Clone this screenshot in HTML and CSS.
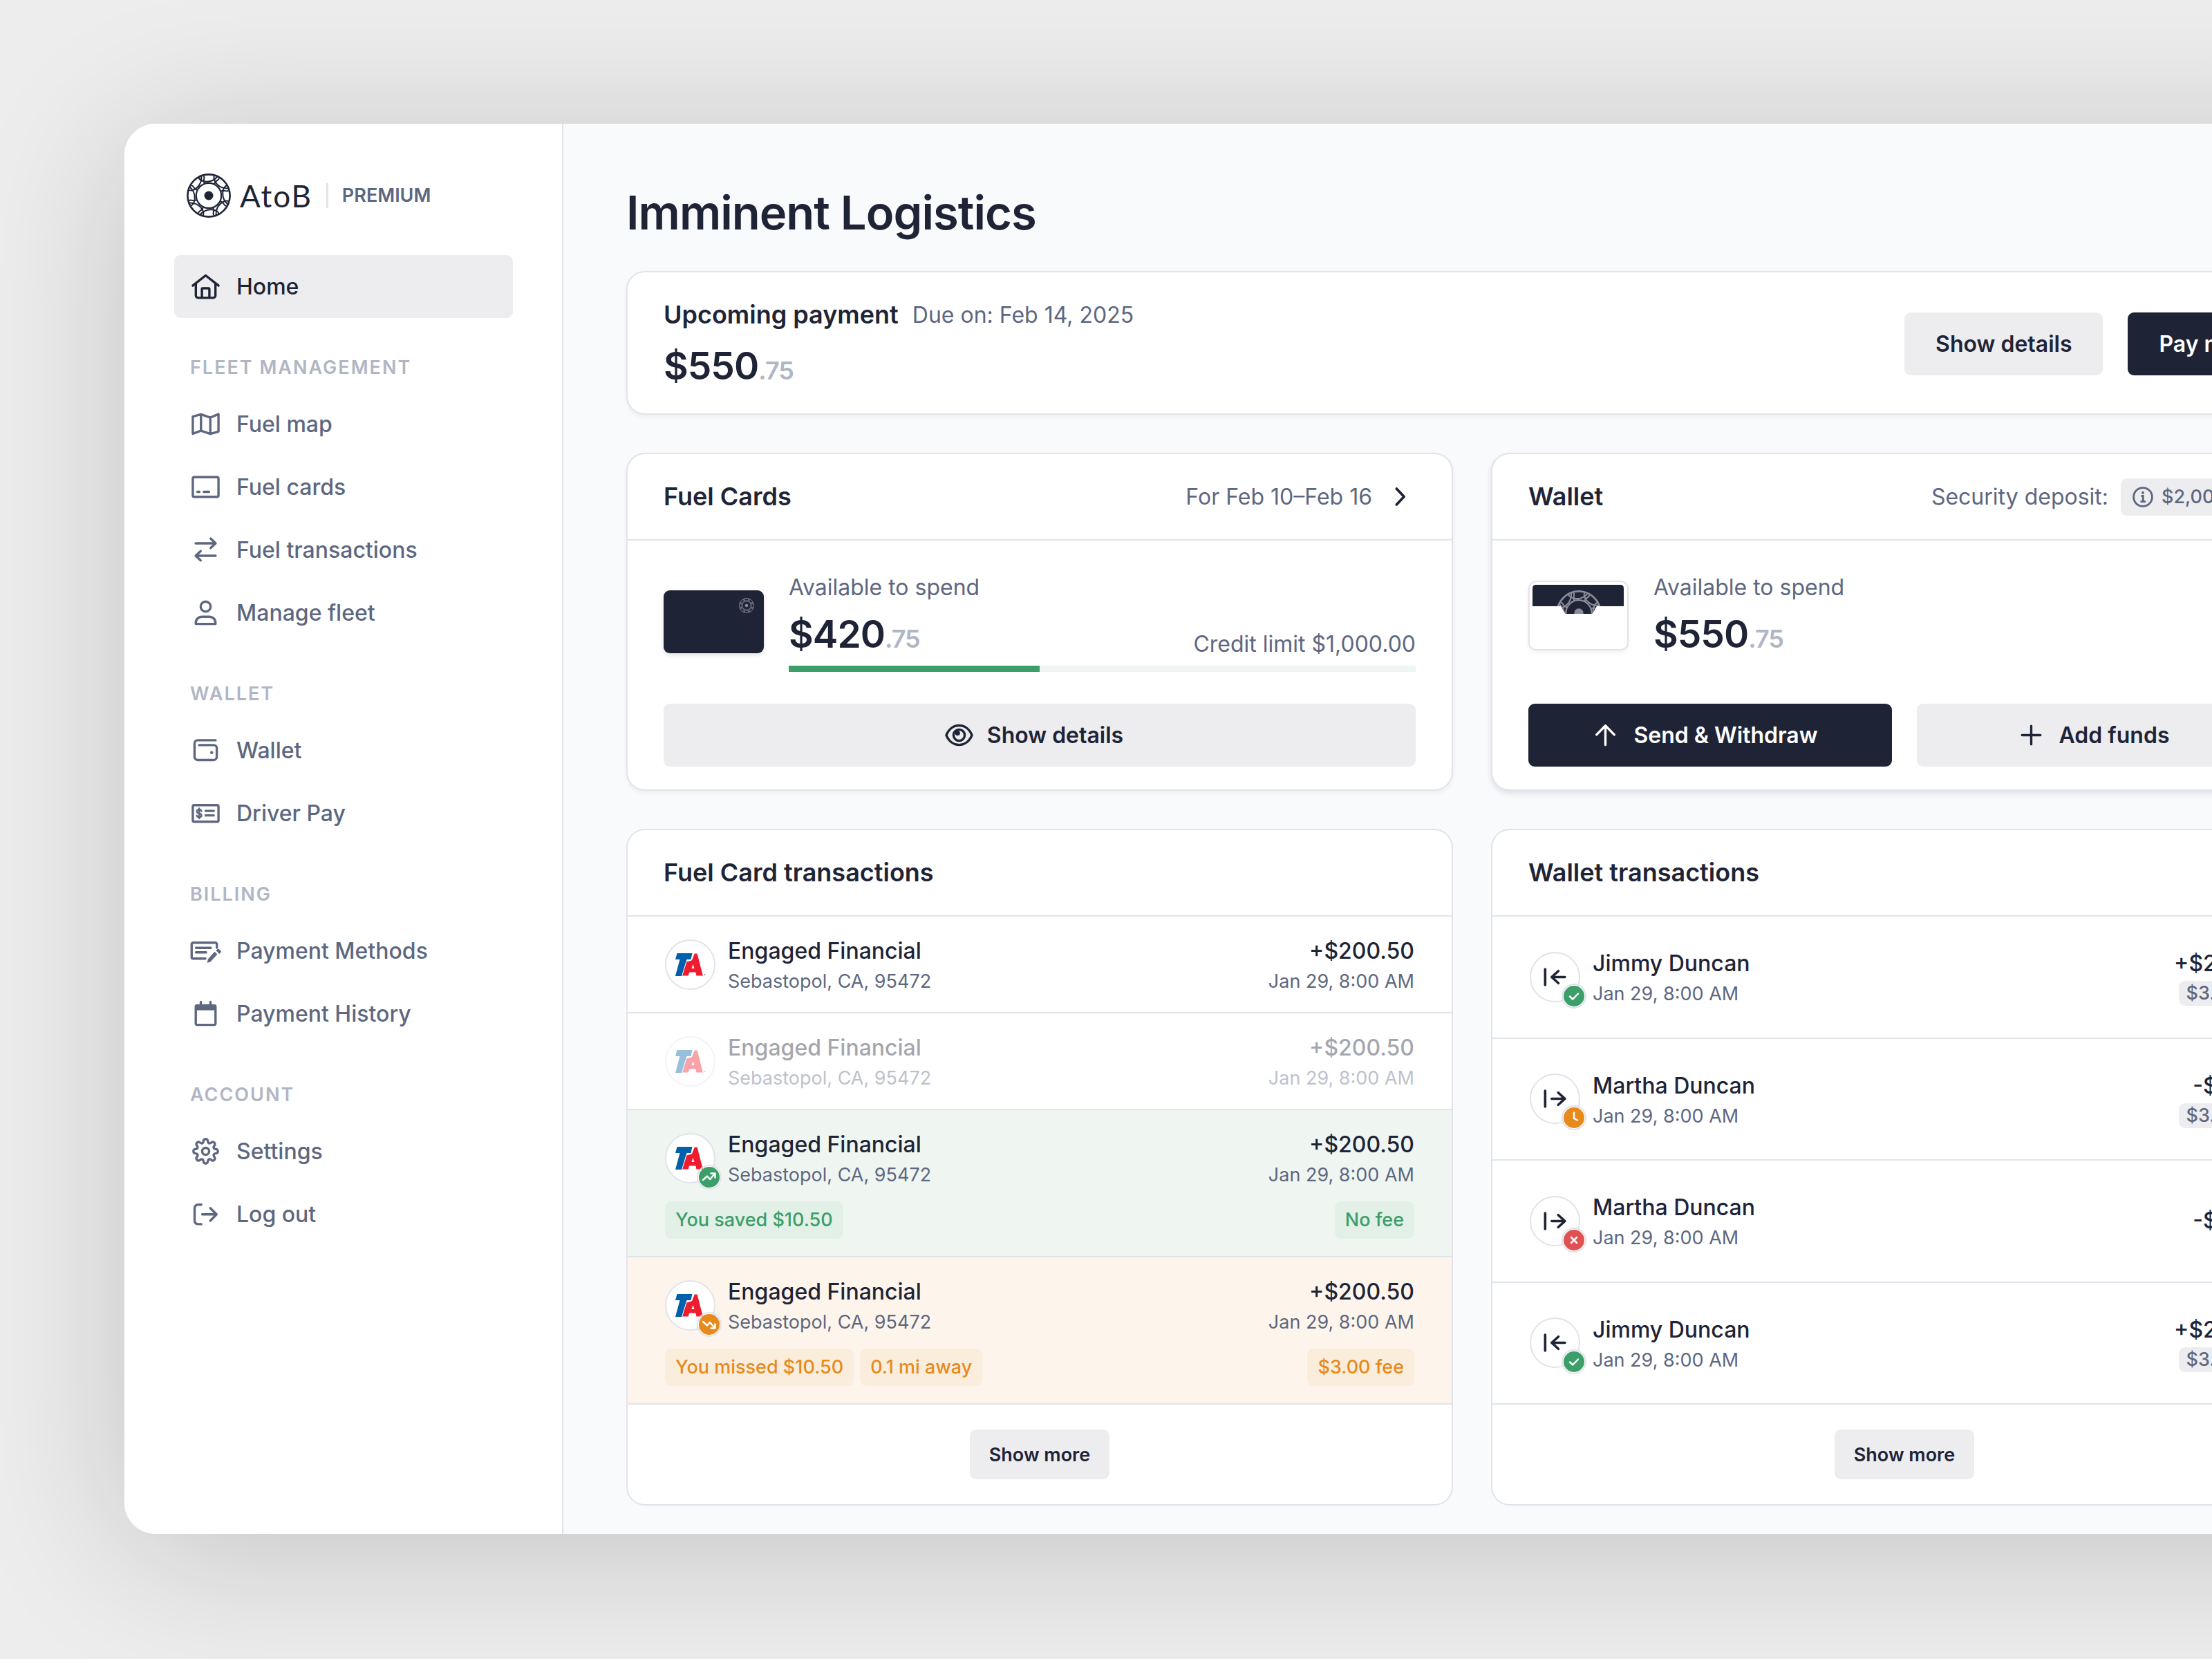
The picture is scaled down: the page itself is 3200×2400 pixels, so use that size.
FILE: index.html
```html
<!DOCTYPE html>
<html lang="en">
<head>
<meta charset="utf-8">
<meta name="viewport" content="width=device-width, initial-scale=1">
<title>AtoB – Imminent Logistics</title>
<link rel="stylesheet" href="styles.css">
</head>
<body>
<svg class="sprite" aria-hidden="true">
  <defs>
    <path id="wheel-arc" d="M-15 -26.500C-12 -19.500 3 -16.500 12.500 -27.500M-7.500 -28.500C-4.500 -26 -9.500 -22 -6 -17.500"/>
    <symbol id="wheel" viewBox="-32 -32 64 64">
      <g fill="none" stroke="currentColor">
        <circle r="30.600" stroke-width="2.600"/>
        <circle r="18.200" stroke-width="2.200"/>
        <g stroke-width="2">
          <use href="#wheel-arc"/>
          <use href="#wheel-arc" transform="rotate(45)"/>
          <use href="#wheel-arc" transform="rotate(90)"/>
          <use href="#wheel-arc" transform="rotate(135)"/>
          <use href="#wheel-arc" transform="rotate(180)"/>
          <use href="#wheel-arc" transform="rotate(225)"/>
          <use href="#wheel-arc" transform="rotate(270)"/>
          <use href="#wheel-arc" transform="rotate(315)"/>
        </g>
      </g>
      <circle r="6.500" fill="currentColor"/>
    </symbol>
    <symbol id="ta" viewBox="0 0 44 33">
      <path fill="#0060a9" d="M2.500 0H24.500L22.500 9H16.500L10 33H0L6.500 9H0z"/>
      <path fill="#ee1c2e" stroke="#fff" stroke-width="1" d="M23.500 10L27.500 0H32L40.500 33H30L29 28H20.500L19 33H9.500L16 12z"/>
      <path fill="#fff" d="M25.500 16L27.500 22H23.500z"/>
      <circle cx="42.500" cy="31" r="1" fill="#8b8e98"/>
    </symbol>
    <symbol id="bar-in" viewBox="0 0 20 20"><path d="M3.700 4.900v10.200M16.400 10H7.900M12.200 6.100L7.900 10l4.300 3.900"/></symbol>
    <symbol id="bar-out" viewBox="0 0 20 20"><path d="M3.700 4.900v10.200M7.900 10h8.500M12.100 6.100l4.300 3.900l-4.300 3.900"/></symbol>
    <symbol id="check" viewBox="0 0 30 30"><path d="M9 15.500l4.200 4L21 11.500"/></symbol>
  </defs>
</svg>

<div class="app">
  <aside class="sidebar">
    <div class="brand">
      <svg class="brand-mark" aria-hidden="true"><use href="#wheel"/></svg>
      <span class="brand-name">AtoB</span>
      <span class="brand-plan">PREMIUM</span>
    </div>
    <nav aria-label="Main">
      <a class="nav-item is-active" href="#home">
        <svg class="icon" viewBox="0 0 20 20" aria-hidden="true"><path d="M1.750 9.400L10 2.900l8.250 6.500M3.700 8.300v7.500a1.450 1.450 0 0 0 1.450 1.450h9.700a1.450 1.450 0 0 0 1.450-1.450V8.300M7.600 17V11.700q0-.600.600-.600h3.600q.600 0 .600.600V17"/></svg>
        Home</a>

      <h2 class="nav-title">FLEET MANAGEMENT</h2>
      <a class="nav-item" href="#map">
        <svg class="icon" viewBox="0 0 20 20" aria-hidden="true"><path d="M1.750 5.200L7 3.700l6 2.100l5.250-2.200v11.200L13 16.300l-6-2l-5.250 1.900zM7 3.700v10.600M13 5.800v10.500"/></svg>
        Fuel map</a>
      <a class="nav-item" href="#cards">
        <svg class="icon" viewBox="0 0 20 20" aria-hidden="true"><rect x="1.750" y="3.650" width="16.500" height="12.700" rx=".9"/><path d="M4.700 13.100h1.300M8.800 13.100h3.400"/></svg>
        Fuel cards</a>
      <a class="nav-item" href="#transactions">
        <svg class="icon" viewBox="0 0 20 20" aria-hidden="true"><path d="M3.600 5.800h12.800M13.200 2.700l3.200 3.100l-3.200 3M16.400 13.800H3.600M6.800 10.800l-3.200 3l3.200 3"/></svg>
        Fuel transactions</a>
      <a class="nav-item" href="#fleet">
        <svg class="icon" viewBox="0 0 20 20" aria-hidden="true"><circle cx="10" cy="6" r="3.200"/><path d="M3.650 17.150v-.6c0-2.300 1.700-4 4-4h4.700c2.300 0 4 1.700 4 4v.6z"/></svg>
        Manage fleet</a>

      <h2 class="nav-title">WALLET</h2>
      <a class="nav-item" href="#wallet">
        <svg class="icon" viewBox="0 0 20 20" aria-hidden="true"><path d="M16.400 3.500H4.850a2 2 0 0 0-2 2v8.700a2 2 0 0 0 2 2h10.300a2 2 0 0 0 2-2V8.600a2 2 0 0 0-2-2H5.800"/><circle class="solid" cx="13.900" cy="11.400" r="1"/></svg>
        Wallet</a>
      <a class="nav-item" href="#driver-pay">
        <svg class="icon" viewBox="0 0 20 20" aria-hidden="true"><rect x="1.750" y="4.750" width="16.500" height="10.700" rx=".9"/><path d="M10 8.500h5.200M10 11.400h5.200"/><path class="thin" d="M7.300 8.700c-.2-.7-.8-1-1.500-1c-1.900 0-1.900 2.100 0 2.400c2.100.3 2 2.400 0 2.400c-.8 0-1.400-.4-1.500-1.100M5.850 6.900v6.400"/></svg>
        Driver Pay</a>

      <h2 class="nav-title">BILLING</h2>
      <a class="nav-item" href="#methods">
        <svg class="icon" viewBox="0 0 20 20" aria-hidden="true"><path d="M17.200 8V5.700a.9.900 0 0 0-.9-.9H1.900a.9.900 0 0 0-.9.900v8.400a.9.900 0 0 0 .9.900h7.900M3.800 8.100h9.500M3.800 11h6.500"/><path class="solid" d="M11 17.800l.5-2.500l4.300-4.700l1.700 1.600l-4.300 4.800zM16.700 9.900l.9-1q.5-.5 1.100.1l1 1q.4.500 0 1l-.9 1z"/></svg>
        Payment Methods</a>
      <a class="nav-item" href="#history">
        <svg class="icon" viewBox="0 0 20 20" aria-hidden="true"><rect x="3.650" y="4.650" width="12.700" height="12.500" rx=".9"/><path d="M6.900 2.400v2M13.100 2.400v2"/><path class="solid" d="M3.500 4.500h13v3.300h-13z"/></svg>
        Payment History</a>

      <h2 class="nav-title">ACCOUNT</h2>
      <a class="nav-item" href="#settings">
        <svg class="icon" viewBox="-10 -10 20 20" aria-hidden="true"><path d="M-1.270-7.190A1.500 1.500 0 0 1 1.270-7.190Q1.570-3.790 4.190-5.980A1.500 1.500 0 0 1 5.980-4.190Q3.790-1.570 7.190-1.270A1.500 1.500 0 0 1 7.190 1.270Q3.790 1.570 5.980 4.190A1.500 1.500 0 0 1 4.190 5.980Q1.570 3.790 1.270 7.190A1.500 1.500 0 0 1-1.270 7.190Q-1.570 3.790-4.190 5.980A1.500 1.500 0 0 1-5.980 4.190Q-3.790 1.570-7.190 1.270A1.500 1.500 0 0 1-7.190-1.270Q-3.790-1.570-5.980-4.190A1.500 1.500 0 0 1-4.190-5.980Q-1.570-3.790-1.270-7.190z"/><circle r="2.250"/></svg>
        Settings</a>
      <a class="nav-item" href="#logout">
        <svg class="icon" viewBox="0 0 20 20" aria-hidden="true"><path d="M7.200 3.900H5.100a2.200 2.200 0 0 0-2.200 2.200v8.100a2.200 2.200 0 0 0 2.200 2.200h2.100M7.800 10.100h9.200M13 6.100l4 4l-4 4.100"/></svg>
        Log out</a>
    </nav>
  </aside>

  <main class="main">
    <h1 class="page-title">Imminent Logistics</h1>

    <div class="board">
      <section class="card card-raised upcoming">
        <div class="upcoming-info">
          <div class="upcoming-head">
            <h2 class="card-title">Upcoming payment</h2>
            <span class="muted">Due on: Feb 14, 2025</span>
          </div>
          <p class="amount">$550<span class="cents">.75</span></p>
        </div>
        <div class="upcoming-actions">
          <button class="btn" type="button">Show details</button>
          <button class="btn btn-dark" type="button">Pay now</button>
        </div>
      </section>

      <section class="card card-raised">
        <header class="card-head">
          <h2 class="card-title">Fuel Cards</h2>
          <a class="card-link" href="#period">For Feb 10–Feb 16
            <svg class="icon" viewBox="0 0 20 20" aria-hidden="true"><path d="M7.700 4.900l4.800 5.100l-4.800 5.100"/></svg></a>
        </header>
        <div class="card-body">
          <div class="balance">
            <div class="fuel-card"><svg class="fuel-card-mark" aria-hidden="true"><use href="#wheel"/></svg></div>
            <div class="balance-info">
              <p class="muted">Available to spend</p>
              <div class="balance-line">
                <p class="amount">$420<span class="cents">.75</span></p>
                <p class="muted">Credit limit $1,000.00</p>
              </div>
              <div class="meter"><div class="meter-fill" style="width:40%"></div></div>
            </div>
          </div>
          <div class="actions">
            <button class="btn btn-icon" type="button">
              <svg class="icon" viewBox="0 0 20 20" aria-hidden="true"><path d="M1.750 10C3.300 6.200 6.300 3.750 10 3.750S16.700 6.200 18.250 10C16.700 13.800 13.700 16.250 10 16.250S3.300 13.800 1.750 10z"/><circle cx="10" cy="10" r="3.600"/><circle class="solid" cx="9" cy="8.700" r="1.600"/></svg>
              <span>Show details</span></button>
          </div>
        </div>
      </section>

      <section class="card card-lifted">
        <header class="card-head">
          <h2 class="card-title">Wallet</h2>
          <div class="deposit">
            <span class="muted">Security deposit:</span>
            <span class="deposit-chip">
              <svg class="icon-info" viewBox="0 0 36 36" aria-hidden="true"><circle cx="18" cy="18" r="13.400"/><path d="M15.500 16.500h2.800v8M14.500 24.700h7.500"/><circle class="solid" cx="18" cy="11.800" r="2"/></svg>
              $2,000.00</span>
          </div>
        </header>
        <div class="card-body">
          <div class="balance">
            <svg class="wallet-art" viewBox="0 0 145 101" aria-hidden="true">
              <defs><clipPath id="flap"><path d="M6 11q0-5 5-5h122q5 0 5 5v26h-39l-6 10q-1 1-3 1H56q-2 0-3-1l-6-10H6z"/></clipPath></defs>
              <rect x="1" y="1" width="143" height="99" rx="10" fill="#fff" stroke="#e2e3ea" stroke-width="2"/>
              <g clip-path="url(#flap)">
                <path fill="#1e2436" d="M0 0h145v60H0z"/>
                <svg class="wallet-wheel" x="40" y="14" width="66" height="66"><use href="#wheel"/></svg>
              </g>
            </svg>
            <div class="balance-info">
              <p class="muted">Available to spend</p>
              <div class="balance-line">
                <p class="amount">$550<span class="cents">.75</span></p>
              </div>
            </div>
          </div>
          <div class="actions">
            <button class="btn btn-icon btn-dark" type="button">
              <svg class="icon" viewBox="0 0 20 20" aria-hidden="true"><path d="M10 16.200V3.900M4.300 9.700L10 3.900l5.700 5.800"/></svg>
              <span>Send &amp; Withdraw</span></button>
            <button class="btn btn-icon" type="button">
              <svg class="icon" viewBox="0 0 20 20" aria-hidden="true"><path d="M10 4.100v11.800M4.100 10h11.800"/></svg>
              <span>Add funds</span></button>
          </div>
        </div>
      </section>

      <section class="card">
        <header class="card-head"><h2 class="card-title">Fuel Card transactions</h2></header>
        <ul class="rows">
          <li class="row">
            <div class="row-main">
              <div class="avatar"><svg class="ta" aria-hidden="true"><use href="#ta"/></svg></div>
              <div class="who"><p class="name">Engaged Financial</p><p class="sub">Sebastopol, CA, 95472</p></div>
              <div class="sum"><p class="name">+$200.50</p><p class="sub">Jan 29, 8:00 AM</p></div>
            </div>
          </li>
          <li class="row">
            <div class="row-main is-faded">
              <div class="avatar"><svg class="ta" aria-hidden="true"><use href="#ta"/></svg></div>
              <div class="who"><p class="name">Engaged Financial</p><p class="sub">Sebastopol, CA, 95472</p></div>
              <div class="sum"><p class="name">+$200.50</p><p class="sub">Jan 29, 8:00 AM</p></div>
            </div>
          </li>
          <li class="row row-green">
            <div class="row-main">
              <div class="avatar"><svg class="ta" aria-hidden="true"><use href="#ta"/></svg>
                <svg class="badge badge-green" viewBox="0 0 30 30" aria-hidden="true"><path d="M6 19l6-5.500l4 4.500l7-8M17.500 9.500H23.500V15.500"/></svg></div>
              <div class="who"><p class="name">Engaged Financial</p><p class="sub">Sebastopol, CA, 95472</p></div>
              <div class="sum"><p class="name">+$200.50</p><p class="sub">Jan 29, 8:00 AM</p></div>
            </div>
            <div class="tags"><span class="tag">You saved $10.50</span><span class="tag tag-end">No fee</span></div>
          </li>
          <li class="row row-orange">
            <div class="row-main">
              <div class="avatar"><svg class="ta" aria-hidden="true"><use href="#ta"/></svg>
                <svg class="badge badge-orange" viewBox="0 0 30 30" aria-hidden="true"><path d="M6 11l6 5.500l4-4.500l7 8M17.500 20.500H23.500V14.500"/></svg></div>
              <div class="who"><p class="name">Engaged Financial</p><p class="sub">Sebastopol, CA, 95472</p></div>
              <div class="sum"><p class="name">+$200.50</p><p class="sub">Jan 29, 8:00 AM</p></div>
            </div>
            <div class="tags"><span class="tag">You missed $10.50</span><span class="tag">0.1 mi away</span><span class="tag tag-end">$3.00 fee</span></div>
          </li>
        </ul>
        <footer class="card-foot"><button class="btn btn-small" type="button">Show more</button></footer>
      </section>

      <section class="card">
        <header class="card-head"><h2 class="card-title">Wallet transactions</h2></header>
        <ul class="rows rows-even">
          <li class="row">
            <div class="row-main">
              <div class="avatar"><svg class="icon" aria-hidden="true"><use href="#bar-in"/></svg>
                <svg class="badge badge-green" aria-hidden="true"><use href="#check"/></svg></div>
              <div class="who"><p class="name">Jimmy Duncan</p><p class="sub">Jan 29, 8:00 AM</p></div>
              <div class="sum"><p class="name">+$200.50</p><span class="fee">$3.00 fee</span></div>
            </div>
          </li>
          <li class="row">
            <div class="row-main">
              <div class="avatar"><svg class="icon" aria-hidden="true"><use href="#bar-out"/></svg>
                <svg class="badge badge-orange" viewBox="0 0 30 30" aria-hidden="true"><path d="M15 7.500V16l5 2.500"/></svg></div>
              <div class="who"><p class="name">Martha Duncan</p><p class="sub">Jan 29, 8:00 AM</p></div>
              <div class="sum"><p class="name">-$50.50</p><span class="fee">$3.00 fee</span></div>
            </div>
          </li>
          <li class="row">
            <div class="row-main">
              <div class="avatar"><svg class="icon" aria-hidden="true"><use href="#bar-out"/></svg>
                <svg class="badge badge-red" viewBox="0 0 30 30" aria-hidden="true"><path d="M11 11l8 8M19 11l-8 8"/></svg></div>
              <div class="who"><p class="name">Martha Duncan</p><p class="sub">Jan 29, 8:00 AM</p></div>
              <div class="sum"><p class="name">-$50.50</p></div>
            </div>
          </li>
          <li class="row">
            <div class="row-main">
              <div class="avatar"><svg class="icon" aria-hidden="true"><use href="#bar-in"/></svg>
                <svg class="badge badge-green" aria-hidden="true"><use href="#check"/></svg></div>
              <div class="who"><p class="name">Jimmy Duncan</p><p class="sub">Jan 29, 8:00 AM</p></div>
              <div class="sum"><p class="name">+$200.50</p><span class="fee">$3.00 fee</span></div>
            </div>
          </li>
        </ul>
        <footer class="card-foot"><button class="btn btn-small" type="button">Show more</button></footer>
      </section>
    </div>
  </main>
</div>
</body>
</html>
```

FILE: styles.css
```css
:root {
  --ink: #1e2436;
  --muted: #5d6780;
  --faint: #b1b6c4;
  --line: #e2e3ea;
  --soft: #ededef;
  --green: #3c9e69;
  --orange: #e68a1c;
  --red: #e05252;
}

* { box-sizing: border-box; }

html { background: #ededee; }

body {
  margin: 0;
  min-height: 100vh;
  padding: 179px 0 181px 180px;
  overflow-x: hidden;
  color: var(--ink);
  font-family: Inter, "Liberation Sans", sans-serif;
  font-size: 32px;
  line-height: 45px;
}

h1, h2, p, ul { margin: 0; padding: 0; }
ul { list-style: none; }
a { color: inherit; text-decoration: none; }

.sprite { position: absolute; width: 0; height: 0; }

/* The window runs past the right edge of the page. */
.app {
  display: flex;
  margin-right: -244px;
  border-radius: 45px;
  background: #f9fafc;
  box-shadow: 0 24px 220px rgba(0, 0, 0, .18);
}

.icon {
  flex: none;
  width: 45px;
  height: 45px;
  fill: none;
  stroke: currentColor;
  stroke-width: 1.5;
  stroke-linecap: round;
  stroke-linejoin: round;
}
.solid { fill: currentColor; stroke: none; }
.thin { stroke-width: 1.1; }

/* Sidebar */
.sidebar {
  flex: none;
  width: 635px;
  padding: 72px 71px 0 72px;
  border-right: 2px solid var(--line);
  border-radius: 45px 0 0 45px;
  background: #fff;
}

.brand {
  display: flex;
  align-items: center;
  height: 64px;
  margin-bottom: 54px;
  padding-left: 18px;
}
.brand-mark { width: 64px; height: 64px; }
.brand-name {
  margin-left: 13px;
  font-family: Lato, "Open Sans", sans-serif;
  font-size: 44px;
  letter-spacing: 2px;
}
.brand-plan {
  margin-left: 20px;
  padding-left: 20px;
  border-left: 3px solid var(--line);
  color: var(--muted);
  font-size: 27px;
  font-weight: 600;
  line-height: 36px;
}

.nav-item {
  display: flex;
  align-items: center;
  gap: 22px;
  height: 91px;
  padding: 0 23px;
  border-radius: 9px;
  color: var(--muted);
  font-weight: 500;
}
.nav-item.is-active { background: var(--soft); color: var(--ink); }

.nav-title {
  padding: 54px 0 18px 23px;
  color: var(--faint);
  font-size: 27px;
  font-weight: 600;
  line-height: 36px;
  letter-spacing: 2px;
}

/* Main */
.main { flex: 1; min-width: 0; padding: 88px 91px 41px; }

.page-title {
  margin-bottom: 43px;
  font-size: 67px;
  font-weight: 600;
  line-height: 82px;
  letter-spacing: -1px;
}

.board {
  display: grid;
  grid-template-columns: 1fr 1fr;
  gap: 55px;
}

.card {
  display: flex;
  flex-direction: column;
  min-width: 0;
  border: 2px solid var(--line);
  border-radius: 27px;
  background: #fff;
}
.card-raised { box-shadow: 0 3px 6px rgba(30, 36, 54, .06); }
.card-lifted { box-shadow: 0 4px 9px rgba(30, 36, 54, .12); }

.card-head {
  display: flex;
  align-items: center;
  justify-content: space-between;
  height: 125px;
  padding: 0 52px;
  border-bottom: 2px solid var(--line);
}
.card-title { font-size: 36px; font-weight: 600; line-height: 45px; }
.muted { color: var(--muted); }

.card-link {
  display: flex;
  align-items: center;
  gap: 18px;
  color: var(--muted);
}
.card-link .icon { color: var(--ink); stroke-width: 1.700; }

.amount {
  font-size: 55px;
  font-weight: 600;
  line-height: 64px;
  letter-spacing: -1px;
}
.cents { color: var(--faint); font-size: 36px; line-height: 36px; }

.upcoming {
  grid-column: 1 / -1;
  flex-direction: row;
  align-items: center;
  justify-content: space-between;
  padding: 39px 52px 37px;
}
.upcoming-info { display: grid; gap: 19px; }
.upcoming-head { display: flex; gap: 20px; }
.upcoming-actions { display: flex; gap: 36px; }

/* Buttons */
.btn {
  display: flex;
  align-items: center;
  justify-content: center;
  height: 91px;
  padding: 0 45px;
  border: 0;
  border-radius: 9px;
  background: var(--soft);
  color: var(--ink);
  font: inherit;
  font-weight: 600;
}
.btn-dark { background: var(--ink); color: #fff; }
.btn-icon { flex: 1; }
.btn-icon span { padding: 0 18px; }
.btn-small { height: 72px; padding: 0 28px; font-size: 27px; }

/* Balances */
.card-body {
  display: flex;
  flex: 1;
  flex-direction: column;
  justify-content: space-between;
  gap: 46px;
  padding: 45px 52px 33px;
}
.balance { display: flex; align-items: center; gap: 36px; }
.balance-info { flex: 1; }
.balance-line {
  display: flex;
  align-items: flex-end;
  justify-content: space-between;
  padding-top: 9px;
}
.balance-line .amount { line-height: 73px; }

.meter { height: 9px; margin-top: 9px; background: #eff5f1; }
.meter-fill { height: 100%; background: var(--green); }

.fuel-card {
  display: flex;
  justify-content: flex-end;
  width: 145px;
  height: 91px;
  padding: 11px 14px;
  border-radius: 9px;
  background: var(--ink);
  box-shadow: 0 3px 6px rgba(30, 36, 54, .12);
}
.fuel-card-mark { width: 22px; height: 22px; color: #8b8e98; }
.wallet-art {
  width: 145px;
  height: 101px;
  border-radius: 11px;
  box-shadow: 0 3px 6px rgba(30, 36, 54, .06);
}
.wallet-wheel { color: #8b8e98; }

.actions { display: flex; gap: 36px; }

.deposit { display: flex; align-items: center; gap: 18px; }
.deposit-chip {
  display: flex;
  align-items: center;
  gap: 9px;
  min-width: 231px;
  height: 54px;
  padding: 0 14px;
  border-radius: 9px;
  background: var(--soft);
  color: var(--muted);
  font-size: 27px;
  font-weight: 500;
}
.icon-info { width: 36px; height: 36px; fill: none; stroke: currentColor; stroke-width: 2.800; }

/* Transaction lists */
.rows { display: flex; flex: 1; flex-direction: column; }
.row {
  display: flex;
  flex-direction: column;
  justify-content: center;
  gap: 19px;
  padding: 25px 54px;
  border-bottom: 2px solid var(--line);
}
.rows-even .row { flex: 1; }
.row-main { display: flex; align-items: center; gap: 18px; }
.is-faded { opacity: .4; }

.avatar {
  position: relative;
  display: grid;
  place-items: center;
  width: 73px;
  height: 73px;
  border: 2px solid var(--line);
  border-radius: 50%;
  background: #fff;
}
.avatar .icon { stroke-width: 1.600; }
.ta { width: 44px; height: 33px; }

.badge {
  position: absolute;
  right: -11px;
  bottom: -11px;
  width: 36px;
  height: 36px;
  padding: 1px;
  border: 2px solid var(--line);
  border-radius: 50%;
  background-clip: content-box;
  fill: none;
  stroke: #fff;
  stroke-width: 2.500;
  stroke-linecap: round;
  stroke-linejoin: round;
}
.badge-green { background-color: var(--green); }
.badge-orange { background-color: var(--orange); }
.badge-red { background-color: var(--red); }

.who { flex: 1; }
.sum { display: flex; flex-direction: column; align-items: flex-end; }
.name { font-weight: 500; line-height: 50px; }
.sub { color: var(--muted); font-size: 27px; line-height: 38px; }

.fee {
  height: 36px;
  margin-bottom: 2px;
  padding: 0 10px;
  border-radius: 9px;
  background: var(--soft);
  color: var(--muted);
  font-size: 27px;
  font-weight: 500;
  line-height: 36px;
}

.tags { display: flex; gap: 9px; }
.tag {
  padding: 0 15px;
  border-radius: 9px;
  font-size: 27px;
  font-weight: 500;
  line-height: 54px;
}
.tag-end { margin-left: auto; }
.row-green { background: #eff6f2; }
.row-green .tag { background: #e2f0e7; color: var(--green); }
.row-orange { background: #fdf5eb; }
.row-orange .tag { background: #fbeddc; color: var(--orange); }

.card-foot { display: flex; justify-content: center; padding: 36px; }
```
